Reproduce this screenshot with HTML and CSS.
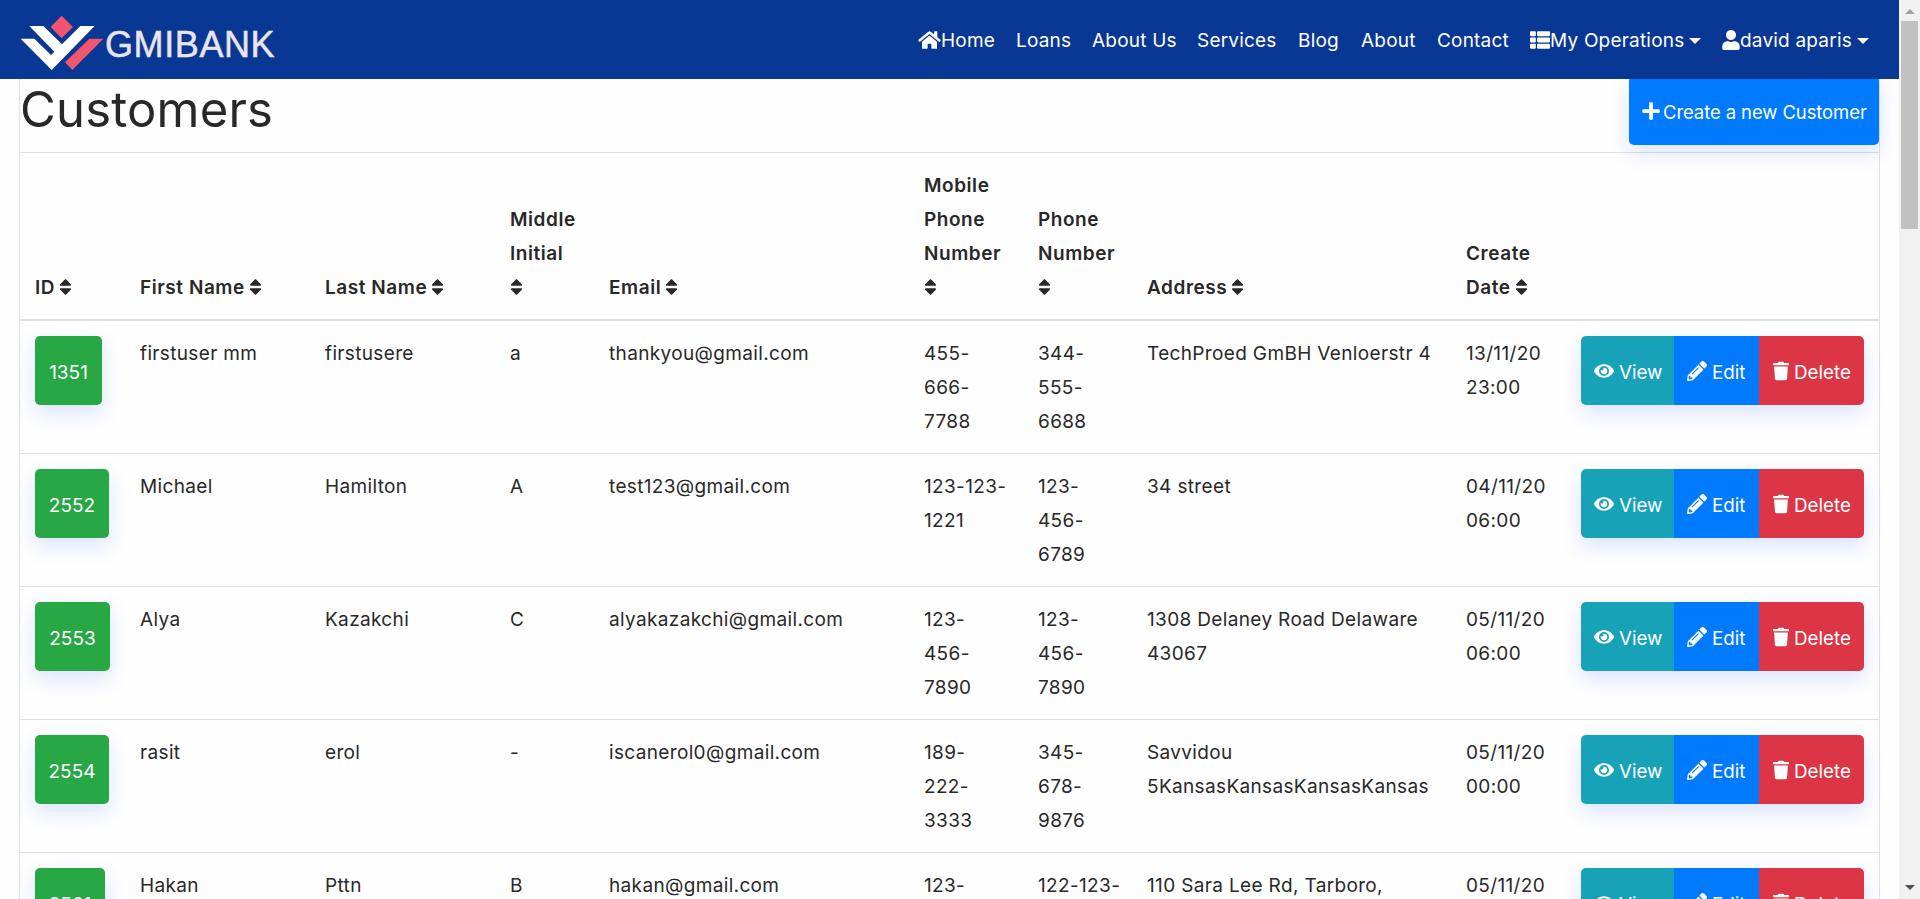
FILE: index.html
```html
<!DOCTYPE html>
<html lang="en">
<head>
<meta charset="utf-8">
<title>Customers</title>
<link rel="stylesheet" href="styles.css">
</head>
<body>
<svg class="defs" aria-hidden="true">
  <symbol id="i-home" viewBox="0 0 576 512"><path d="M280.37 148.26L96 300.11V464a16 16 0 0 0 16 16l112.06-.29a16 16 0 0 0 15.92-16V368a16 16 0 0 1 16-16h64a16 16 0 0 1 16 16v95.64a16 16 0 0 0 16 16.05L464 480a16 16 0 0 0 16-16V300L295.67 148.26a12.19 12.19 0 0 0-15.3 0zM571.6 251.47L488 182.56V44.05a12 12 0 0 0-12-12h-56a12 12 0 0 0-12 12v72.61L318.47 43a48 48 0 0 0-61 0L4.34 251.47a12 12 0 0 0-1.6 16.9l25.5 31A12 12 0 0 0 45.15 301l235.22-193.74a12.19 12.19 0 0 1 15.3 0L530.9 301a12 12 0 0 0 16.9-1.6l25.5-31a12 12 0 0 0-1.7-16.93z"/></symbol>
  <symbol id="i-list" viewBox="0 0 512 512"><path d="M149.333 216v80c0 13.255-10.745 24-24 24H24c-13.255 0-24-10.745-24-24v-80c0-13.255 10.745-24 24-24h101.333c13.255 0 24 10.745 24 24zM0 376v80c0 13.255 10.745 24 24 24h101.333c13.255 0 24-10.745 24-24v-80c0-13.255-10.745-24-24-24H24c-13.255 0-24 10.745-24 24zM125.333 32H24C10.745 32 0 42.745 0 56v80c0 13.255 10.745 24 24 24h101.333c13.255 0 24-10.745 24-24V56c0-13.255-10.745-24-24-24zm80 448H488c13.255 0 24-10.745 24-24v-80c0-13.255-10.745-24-24-24H205.333c-13.255 0-24 10.745-24 24v80c0 13.255 10.745 24 24 24zm-24-424v80c0 13.255 10.745 24 24 24H488c13.255 0 24-10.745 24-24V56c0-13.255-10.745-24-24-24H205.333c-13.255 0-24 10.745-24 24zm24 264H488c13.255 0 24-10.745 24-24v-80c0-13.255-10.745-24-24-24H205.333c-13.255 0-24 10.745-24 24v80c0 13.255 10.745 24 24 24z"/></symbol>
  <symbol id="i-user" viewBox="0 0 448 512"><path d="M224 256c70.7 0 128-57.3 128-128S294.7 0 224 0 96 57.3 96 128s57.3 128 128 128zm89.600 32h-16.700c-22.200 10.200-46.900 16-72.900 16s-50.600-5.800-72.900-16h-16.700C60.200 288 0 348.200 0 422.400V464c0 26.500 21.500 48 48 48h352c26.500 0 48-21.500 48-48v-41.600c0-74.200-60.200-134.400-134.400-134.400z"/></symbol>
  <symbol id="i-plus" viewBox="0 0 448 512"><path d="M416 208H272V64c0-17.670-14.330-32-32-32h-32c-17.670 0-32 14.330-32 32v144H32c-17.670 0-32 14.330-32 32v32c0 17.670 14.330 32 32 32h144v144c0 17.670 14.330 32 32 32h32c17.670 0 32-14.330 32-32V304h144c17.670 0 32-14.330 32-32v-32c0-17.670-14.330-32-32-32z"/></symbol>
  <symbol id="i-sort" viewBox="0 0 320 512"><path d="M41 288h238c21.400 0 32.100 25.900 17 41L177 448c-9.400 9.400-24.600 9.400-33.900 0L24 329c-15.100-15.100-4.400-41 17-41zm255-105L177 64c-9.400-9.400-24.600-9.400-33.900 0L24 183c-15.100 15.100-4.400 41 17 41h238c21.400 0 32.100-25.900 17-41z"/></symbol>
  <symbol id="i-eye" viewBox="0 0 576 512"><path d="M572.520 241.400C518.290 135.590 410.930 64 288 64S57.680 135.640 3.480 241.410a32.350 32.350 0 0 0 0 29.190C57.710 376.410 165.070 448 288 448s230.320-71.640 284.520-177.410a32.350 32.350 0 0 0 0-29.190zM288 400a144 144 0 1 1 144-144 143.930 143.930 0 0 1-144 144zm0-240a95.310 95.310 0 0 0-25.310 3.790 47.850 47.850 0 0 1-66.900 66.900A95.780 95.780 0 1 0 288 160z"/></symbol>
  <symbol id="i-pencil" viewBox="0 0 512 512"><path d="M497.900 142.100l-46.100 46.100c-4.700 4.700-12.300 4.700-17 0l-111-111c-4.700-4.700-4.700-12.300 0-17l46.100-46.100c18.700-18.700 49.100-18.700 67.900 0l60.100 60.100c18.800 18.700 18.800 49.100 0 67.900zM284.200 99.800L21.600 362.400.4 483.900c-2.900 16.400 11.400 30.600 27.800 27.800l121.500-21.300 262.600-262.600c4.700-4.700 4.700-12.300 0-17l-111-111c-4.800-4.700-12.400-4.700-17.100 0zM124.100 339.900c-5.500-5.500-5.500-14.300 0-19.800l154-154c5.500-5.500 14.300-5.500 19.800 0s5.500 14.300 0 19.800l-154 154c-5.500 5.500-14.300 5.500-19.800 0zM88 424h48v36.300l-64.500 11.300-31.100-31.100L51.700 376H88v48z"/></symbol>
  <symbol id="i-trash" viewBox="0 0 448 512"><path d="M432 32H312l-9.400-18.700A24 24 0 0 0 281.100 0H166.800a23.720 23.720 0 0 0-21.400 13.300L136 32H16A16 16 0 0 0 0 48v32a16 16 0 0 0 16 16h416a16 16 0 0 0 16-16V48a16 16 0 0 0-16-16zM32 128L53.200 467a48 48 0 0 0 47.900 45h245.800a48 48 0 0 0 47.900-45L416 128z"/></symbol>
</svg>
<div class="page">
  <header class="navbar">
    <a class="brand">
      <svg class="logo" viewBox="60 45 252 168"><path fill="#fff" d="M62 116H103L153 165L163 155L88 78H130L186 133L241 78H284L155 210Z"/><path fill="#f1556f" d="M185 47L219 81L185 115L152 81ZM268 116H310L217 210L195 187Z"/></svg>
      <span>GMIBANK</span>
    </a>
    <nav class="menu">
      <a><svg class="ic w23"><use href="#i-home"/></svg>Home</a><a>Loans</a><a>About Us</a><a>Services</a><a>Blog</a><a>About</a><a>Contact</a>
      <a><svg class="ic w20"><use href="#i-list"/></svg>My Operations<i class="caret"></i></a>
      <a><svg class="ic w18"><use href="#i-user"/></svg>david aparis<i class="caret"></i></a>
    </nav>
  </header>
  <main class="card">
    <div class="title"><h1>Customers</h1><a class="create"><svg class="ic w18"><use href="#i-plus"/></svg>Create a new Customer</a></div>
    <table>
      <colgroup><col class="c1"><col class="c2"><col class="c3"><col class="c4"><col class="c5"><col class="c6"><col class="c7"><col class="c8"><col class="c9"><col class="c10"></colgroup>
      <thead><tr id="head"></tr></thead>
      <tbody id="rows"></tbody>
    </table>
  </main>
</div>
<div class="scrollbar"><i class="up"></i><i class="thumb"></i><i class="down"></i></div>
<script src="app.js"></script>
</body>
</html>
```
FILE: styles.css
```css
* { box-sizing: border-box; }
body {
  margin: 0;
  height: 899px;
  overflow: hidden;
  display: flex;
  background: #fefefe;
  color: #282828;
  font: 400 19px/34px Inter, "Liberation Sans", sans-serif;
}
.defs { display: none; }
.page { width: 1899px; height: 899px; overflow: hidden; }
.ic { fill: currentColor; height: 20px; flex: none; }
.w23 { width: 23px; }
.w20 { width: 20px; }
.w18 { width: 18px; }
.w16 { width: 16px; }

.navbar {
  position: relative;
  z-index: 1;
  height: 79px;
  background: #093794;
  display: flex;
  justify-content: space-between;
  padding-left: 20px;
}
.brand { display: flex; padding-top: 15px; color: #e9e5ea; }
.brand span {
  font: 36px/42px "Liberation Sans", Arial, sans-serif;
  padding: 9px 0 0 1px;
  letter-spacing: .6px;
  -webkit-text-stroke: .5px #e9e5ea;
}
.logo { width: 84px; height: 56px; }
.menu {
  display: grid;
  grid-template-columns: 98px 76px 105px 101px 63px 76px 93px 192px 177px;
  align-items: center;
  color: #fff;
  padding-top: 2px;
  font-weight: 400;
  letter-spacing: .2px;
  white-space: nowrap;
}
.menu a { display: flex; align-items: center; }
.menu .ic { margin-bottom: 1px; }
.caret { border: 6px solid transparent; border-top-color: #fff; border-bottom: 0; margin-left: 5px; }

.card { width: 1861px; margin-left: 19px; border: solid #dee2e6; border-width: 0 1px; }
.title { height: 73px; display: flex; justify-content: space-between; }
h1 { margin: 1px 0 0; font-size: 49px; line-height: 60px; font-weight: 400; letter-spacing: .2px; }
.create, .id, .btns {
  box-shadow: 0 8px 20px rgba(45, 100, 255, .17);
  border-radius: 5px;
  color: #fff;
  font-weight: 400;
}
.create {
  width: 250px;
  height: 69px;
  margin-top: -3px;
  background: #007bff;
  display: flex;
  align-items: center;
  gap: 3px;
  padding: 3px 0 0 13px;
  font-size: 18.5px;
  letter-spacing: -.1px;
  white-space: nowrap;
}
.create .ic { margin-bottom: 3px; }

table { table-layout: fixed; width: 1859px; border-collapse: separate; border-spacing: 0; }
.c1 { width: 105px; } .c2 { width: 185px; } .c3 { width: 185px; } .c4 { width: 99px; } .c5 { width: 315px; }
.c6 { width: 114px; } .c7 { width: 109px; } .c8 { width: 319px; } .c9 { width: 115px; } .c10 { width: 313px; }
th, td {
  padding: 16px 0 14px 15px;
  text-align: left;
  border-top: 1px solid #dee2e6;
  white-space: nowrap;
  vertical-align: top;
  letter-spacing: .35px;
}
th { vertical-align: bottom; border-bottom: 2px solid #dee2e6; font-weight: 600; letter-spacing: .55px; }
th .ic { width: 13px; vertical-align: -3px; margin-left: 4px; }
th .wrapped { margin-left: 0; }
tbody tr { height: 133px; }
tbody tr:first-child { height: 132px; }
tbody tr:first-child td { border-top: 0; }
td:first-child, td:last-child { padding-top: 15px; }
.id { display: flex; width: 74px; height: 69px; background: #28a745; align-items: center; justify-content: center; padding-top: 4px; letter-spacing: 0; }
.btns { display: flex; width: 283px; height: 69px; overflow: hidden; letter-spacing: 0; }
.btns a { display: flex; align-items: center; gap: 5px; padding: 4px 0 0 13px; font-size: 18.8px; }
.btns .del { padding-left: 14px; }
.btns .ic { margin-bottom: 3px; }
.view { width: 93px; background: #17a2b8; }
.edit { width: 85px; background: #007bff; }
.del { width: 105px; background: #dc3545; }

.scrollbar { width: 21px; background: #f1f1f1; display: flex; flex-direction: column; align-items: center; }
.up { border: 5px solid transparent; border-bottom-color: #a3a3a3; border-top: 0; margin: 9px 0 7px; }
.thumb { width: 17px; height: 208px; background: #c1c1c1; }
.down { border: 5px solid transparent; border-top-color: #505050; border-bottom: 0; margin: auto 0 9px; }
```
FILE: app.js
```js
const icon = (name, cls) => `<svg class="ic ${cls}"><use href="#i-${name}"/></svg>`;
const heads = ["ID", "First Name", "Last Name", "Middle<br>Initial<br>", "Email", "Mobile<br>Phone<br>Number<br>", "Phone<br>Number<br>", "Address", "Create<br>Date"];
document.getElementById("head").innerHTML =
  heads.map(h => `<th>${h}${icon("sort", h.endsWith("<br>") ? "wrapped" : "")}</th>`).join("") + "<th></th>";

const rows = [
  [1351, 67, "firstuser mm", "firstusere", "a", "thankyou@gmail.com", "455-<br>666-<br>7788", "344-<br>555-<br>6688", "TechProed GmBH Venloerstr 4", "13/11/20<br>23:00"],
  [2552, 74, "Michael", "Hamilton", "A", "test123@gmail.com", "123-123-<br>1221", "123-<br>456-<br>6789", "34 street", "04/11/20<br>06:00"],
  [2553, 75, "Alya", "Kazakchi", "C", "alyakazakchi@gmail.com", "123-<br>456-<br>7890", "123-<br>456-<br>7890", "1308 Delaney Road Delaware<br>43067", "05/11/20<br>06:00"],
  [2554, 74, "rasit", "erol", "-", "iscanerol0@gmail.com", "189-<br>222-<br>3333", "345-<br>678-<br>9876", "Savvidou<br>5KansasKansasKansasKansas", "05/11/20<br>00:00"],
  [2561, 70, "Hakan", "Pttn", "B", "hakan@gmail.com", "123-", "122-123-", "110 Sara Lee Rd, Tarboro,", "05/11/20"]
];
document.getElementById("rows").innerHTML = rows.map(([id, w, ...cells]) =>
  `<tr><td><a class="id" style="width:${w}px">${id}</a></td>` +
  cells.map(c => `<td>${c}</td>`).join("") +
  `<td><div class="btns"><a class="view">${icon("eye", "w20")}View</a><a class="edit">${icon("pencil", "w20")}Edit</a><a class="del">${icon("trash", "w16")}Delete</a></div></td></tr>`
).join("");
```
